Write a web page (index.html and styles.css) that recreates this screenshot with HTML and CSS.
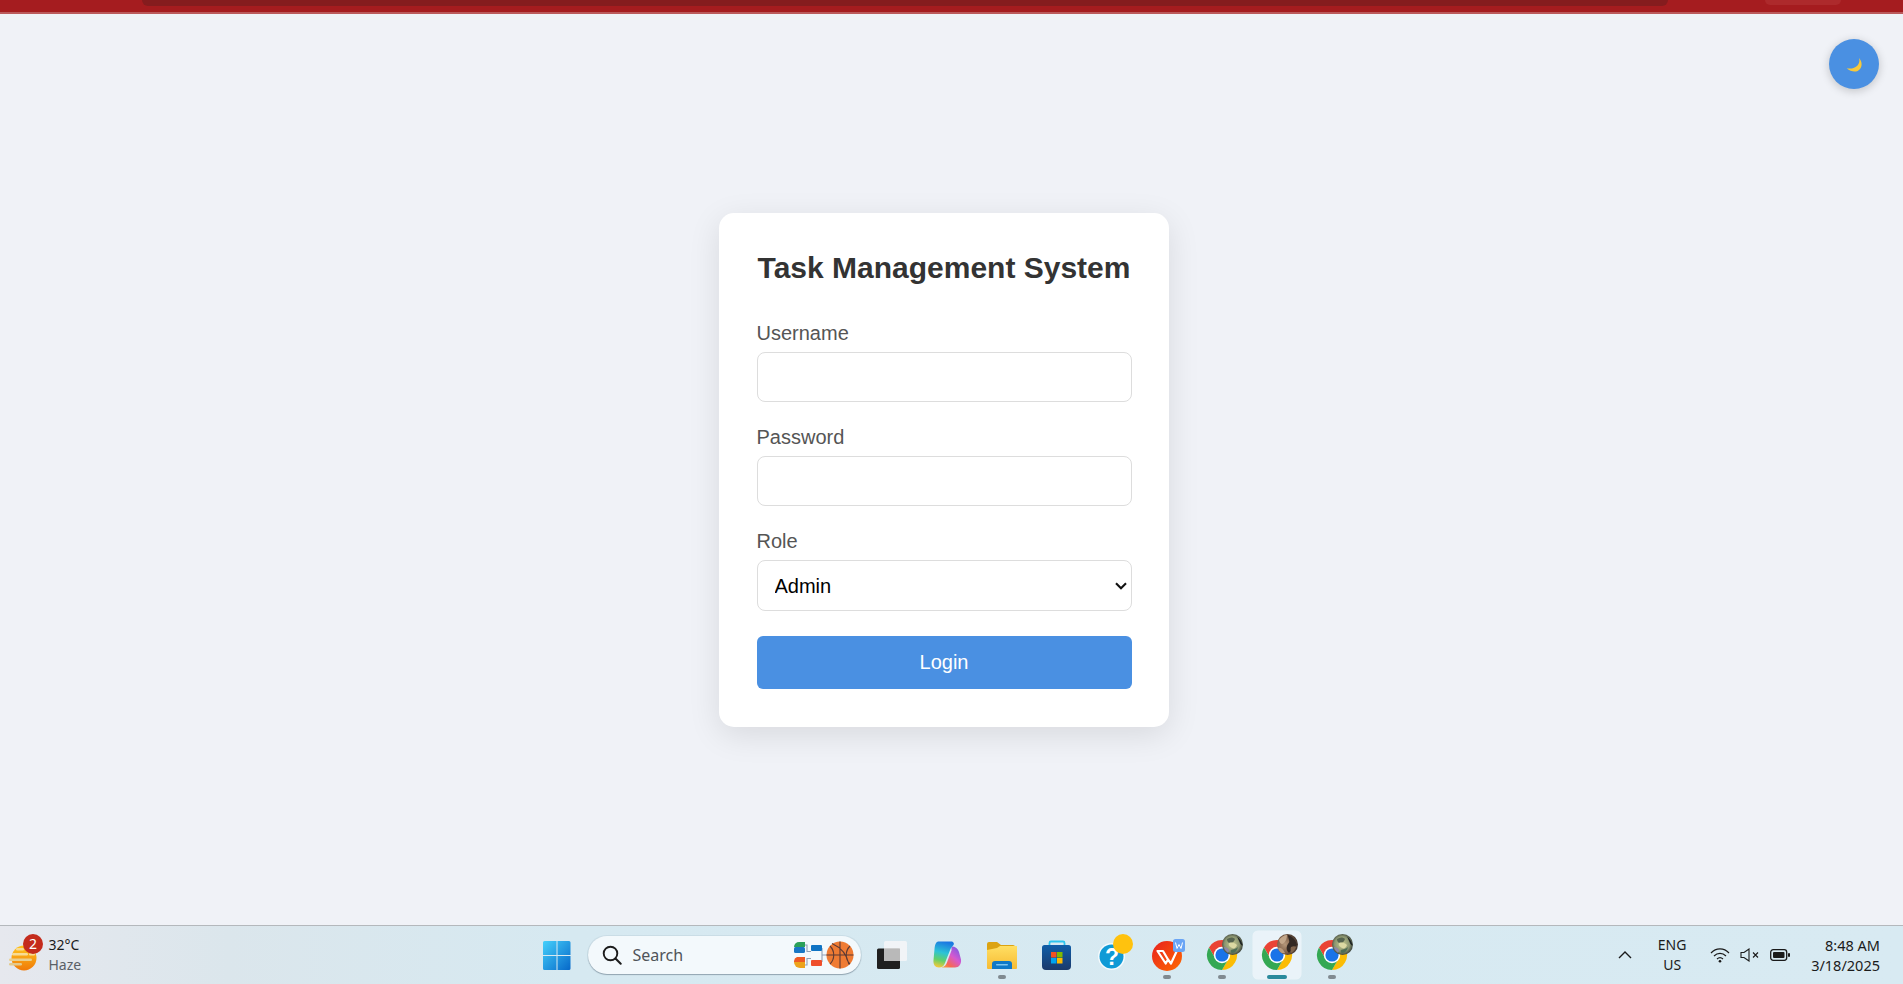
FILE: index.html
```html
<!DOCTYPE html>
<html lang="en">
<head>
<meta charset="utf-8">
<title>Task Management System</title>
<link rel="stylesheet" href="styles.css">
</head>
<body>
<svg class="defs" width="0" height="0" aria-hidden="true">
  <defs>
    <radialGradient id="avA" cx="48%" cy="48%" r="58%"><stop offset="0" stop-color="#c6c98c"/><stop offset=".62" stop-color="#8b9570"/><stop offset="1" stop-color="#23282a"/></radialGradient>
    <radialGradient id="avB" cx="38%" cy="50%" r="68%"><stop offset="0" stop-color="#b5977a"/><stop offset=".6" stop-color="#7b5b45"/><stop offset="1" stop-color="#2b2522"/></radialGradient>
    <symbol id="chrome" viewBox="0 0 48 48">
      <path fill="#ea4335" d="M11 16.500A15 15 0 0 1 37 16.500H24L17.500 27.750Z"/>
      <path fill="#fbbc04" d="M37 16.500A15 15 0 0 1 24 39L30.500 27.750 24 16.500Z"/>
      <path fill="#34a853" d="M24 39A15 15 0 0 1 11 16.500L17.500 27.750 30.500 27.750Z"/>
      <circle cx="24" cy="24" r="8.200" fill="#fff"/>
      <circle cx="24" cy="24" r="6.600" fill="#1a73e8"/>
    </symbol>
    <symbol id="avatar-green" viewBox="0 0 48 48">
      <circle cx="34.500" cy="13.500" r="10.500" fill="url(#avA)"/>
      <path d="M29 8c3-2 6-2 8 0-1 3-3 4-5 4s-3-2-3-4Z" fill="#56644f"/>
      <path d="M31 12c3-1 6 0 8 2-1 3-3 4-5 3s-4-3-3-5Z" fill="#dcd9a3"/>
      <path d="M26 16c2 0 4 1 5 3 0 2-1 3-2 2s-3-3-3-5Z" fill="#8d86a3"/>
      <path d="M33 19c2-1 5-1 7-3-1 4-3 6-6 6-1 0-2-2-1-3Z" fill="#4f6e55"/>
      <path d="M39 5.500c2 1.500 5 5 5.500 9-2 0-3-4-5.500-9Z" fill="#1e2324"/>
    </symbol>
    <symbol id="avatar-brown" viewBox="0 0 48 48">
      <circle cx="34.500" cy="13.500" r="10.500" fill="url(#avB)"/>
      <path d="M35 4c4 1 8 5 9 10-3 3-6 5-8 8-2-2-3-4-2-7s3-3 2-6-1-4-1-5Z" fill="#332823"/>
      <path d="M26 9c2-3 5-5 8-5 0 3-1 6-3 8s-4 1-5-3Z" fill="#c4a78a"/>
      <path d="M25 17c2-1 5 0 7 5-3 1-6-1-7-5Z" fill="#b99a7d"/>
      <path d="M38 16c2-1 4-1 5 0-1 3-3 5-5 6 0-2-1-4 0-6Z" fill="#82654d"/>
    </symbol>
  </defs>
</svg>

<div class="browser-strip">
  <div class="strip-tabs"></div>
  <div class="strip-tab"></div>
</div>

<main class="page">
  <button class="theme-toggle" type="button" aria-label="Toggle dark mode">
    <svg width="16" height="16" viewBox="0 0 16 16"><path fill="#f8c93a" d="M13 2C16 5 16.500 10 14 13 11.500 16.500 5.500 16.500 .7 12.300 5 13.200 9 12.200 11.500 9.500 13.500 7.500 13.800 4.500 13 2Z"/></svg>
  </button>
  <form class="card">
    <h1 class="title">Task Management System</h1>
    <div class="field">
      <label class="label" for="username">Username</label>
      <input class="control" id="username" type="text">
    </div>
    <div class="field">
      <label class="label" for="password">Password</label>
      <input class="control" id="password" type="password">
    </div>
    <div class="field field-last">
      <label class="label" for="role">Role</label>
      <div class="select-wrap">
        <select class="control control-select" id="role">
          <option>Admin</option>
          <option>User</option>
        </select>
        <svg class="select-arrow" width="12" height="8" viewBox="0 0 12 8"><path d="M1 1.200l5 5 5-5" fill="none" stroke="#111" stroke-width="2.100"/></svg>
      </div>
    </div>
    <button class="submit" type="button">Login</button>
  </form>
</main>

<footer class="taskbar">
  <div class="weather">
    <span class="weather-icon">
      <svg width="36" height="36" viewBox="0 0 36 36">
        <defs><linearGradient id="sun" x1="0" y1="0" x2="0" y2="1"><stop offset="0" stop-color="#ffc51f"/><stop offset="1" stop-color="#f07a08"/></linearGradient></defs>
        <circle cx="19" cy="21" r="12.500" fill="url(#sun)"/>
        <rect x="11" y="11" width="8" height="2.500" rx="1.200" fill="#f7dc95"/>
        <rect x="7" y="16" width="16" height="2.500" rx="1.200" fill="#f7dc95"/>
        <rect x="24" y="16" width="6" height="2.500" rx="1.200" fill="#f7dc95"/>
        <rect x="4" y="21.500" width="23" height="2.500" rx="1.200" fill="#e9cf8f"/>
        <rect x="4" y="26" width="13" height="2.500" rx="1.200" fill="#e3c98c"/>
      </svg>
      <span class="weather-badge">2</span>
    </span>
    <span class="weather-text">
      <span class="weather-temp">32°C</span>
      <span class="weather-cond">Haze</span>
    </span>
  </div>

  <div class="taskbar-center">
    <div class="slot">
      <svg width="48" height="48" viewBox="0 0 48 48">
        <defs><linearGradient id="win" x1="0" y1="0" x2="1" y2="1"><stop offset="0" stop-color="#45d0fb"/><stop offset="1" stop-color="#0668c9"/></linearGradient></defs>
        <path fill="url(#win)" d="M10 11.500a1.500 1.500 0 0 1 1.500-1.500h12v14h-13.500ZM24.500 10h11.500a1.500 1.500 0 0 1 1.500 1.500V24h-13ZM10 25h13.500v14h-12a1.500 1.500 0 0 1-1.500-1.500ZM24.500 25h13v12.500a1.500 1.500 0 0 1-1.500 1.500h-11.500Z"/>
      </svg>
    </div>

    <div class="search">
      <svg class="search-glass" width="20" height="20" viewBox="0 0 20 20"><circle cx="8.500" cy="8.500" r="6.800" fill="none" stroke="#1c1c1c" stroke-width="1.900"/><path d="M13.500 13.500l5.200 5.200" stroke="#1c1c1c" stroke-width="2" stroke-linecap="round"/></svg>
      <span class="search-label">Search</span>
      <svg class="search-bracket" width="60" height="28" viewBox="0 0 60 28">
        <path d="M10 4h3v6.500h4M10 24h3v-6.500h4M28 7v14M28 14h5" fill="none" stroke="#8fa0b5" stroke-width="1.100"/>
        <path fill="#2aa05a" d="M0 6a5 5 0 0 1 5-5h6v5Z"/>
        <rect x="0" y="6" width="11" height="6" rx="1.500" fill="#1977c4"/>
        <path fill="#ee5a24" d="M0 21a5 5 0 0 1 3-5h8v5Z"/>
        <path fill="#eda31b" d="M0 21h11v6H6a6 6 0 0 1-6-6Z"/>
        <rect x="17" y="4" width="11" height="6" rx="1" fill="#0f74c4"/>
        <rect x="17" y="19" width="11" height="6" rx="1" fill="#ef4e2b"/>
        <circle cx="46" cy="14" r="13.500" fill="#ef7b33"/>
        <path d="M46 .5v27M32.500 14h27M36 5c5 5 5 13 0 18M56 5c-5 5-5 13 0 18M38 2.500c9 4 15 11 17 21" fill="none" stroke="#5d3a34" stroke-width="1.100"/>
      </svg>
    </div>

    <div class="slot">
      <svg width="48" height="48" viewBox="0 0 48 48">
        <rect x="9" y="17.500" width="23" height="20.500" rx="1.500" fill="#1f1f1f"/>
        <rect x="16" y="10" width="23" height="20" rx="1.500" fill="#f6f7f8" fill-opacity=".82"/>
        <rect x="16" y="17.500" width="16" height="12.500" fill="#b9b9b9"/>
      </svg>
    </div>

    <div class="slot">
      <svg width="48" height="48" viewBox="0 0 48 48">
        <defs>
          <linearGradient id="cpL" x1="0.500" y1="0" x2="0.300" y2="1"><stop offset="0" stop-color="#1b78e2"/><stop offset=".42" stop-color="#2cc3d6"/><stop offset=".72" stop-color="#62d068"/><stop offset="1" stop-color="#f6c83a"/></linearGradient>
          <linearGradient id="cpR" x1="0.900" y1="0" x2="0.100" y2="1"><stop offset="0" stop-color="#6f5be6"/><stop offset=".45" stop-color="#d659cf"/><stop offset=".8" stop-color="#f7694f"/><stop offset="1" stop-color="#f9a33c"/></linearGradient>
        </defs>
        <path fill="url(#cpR)" d="M28.500 15.500C32.500 15.500 35 17.500 36 21L38 28.500C38.500 33 36 36.500 32 36.500H18.500C21.500 36 23 34 24 31.500 25.500 27 27 23 28.500 19.500Z"/>
        <path fill="url(#cpL)" d="M16 10.500H28C30.500 10.500 31.500 12.500 30.500 14 29.500 15.500 28 16.500 27.500 18 26.500 20.500 24 27 22 32 20.800 35 19 36.500 16 36.500 12 36.500 10 33.500 10.500 29L11.500 18C12 13 13 10.500 16 10.500Z"/>
      </svg>
    </div>

    <div class="slot slot-open">
      <svg width="48" height="48" viewBox="0 0 48 48">
        <defs><linearGradient id="fold" x1="0" y1="0" x2="0" y2="1"><stop offset="0" stop-color="#ffdf63"/><stop offset="1" stop-color="#f7bb33"/></linearGradient></defs>
        <path fill="#dca312" d="M9 13a2 2 0 0 1 2-2h8l4 3h12a2 2 0 0 1 2 2v8H9Z"/>
        <path fill="url(#fold)" d="M9 19l10-2 3-2h17v22a1 1 0 0 1-1 1H10a1 1 0 0 1-1-1Z"/>
        <path fill="#0f78c8" d="M14 38v-5a3 3 0 0 1 3-3h14a3 3 0 0 1 3 3v5Z"/>
        <rect x="18" y="33" width="12" height="1.500" rx=".7" fill="#7cc4ef"/>
      </svg>
    </div>

    <div class="slot">
      <svg width="48" height="48" viewBox="0 0 48 48">
        <defs><linearGradient id="bag" x1="0" y1="0" x2="0" y2="1"><stop offset="0" stop-color="#0f5da8"/><stop offset="1" stop-color="#1b3a6b"/></linearGradient></defs>
        <path d="M16.500 15v-3a1.500 1.500 0 0 1 1.500-1.500h12a1.500 1.500 0 0 1 1.500 1.500v3" fill="none" stroke="#2cc4ee" stroke-width="1.800"/>
        <path fill="url(#bag)" d="M9 16.500a2.500 2.500 0 0 1 2.500-2.500h24a2.500 2.500 0 0 1 2.500 2.500V35a4 4 0 0 1-4 4H13a4 4 0 0 1-4-4Z"/>
        <rect x="18" y="21" width="5.500" height="5.500" fill="#f25022"/>
        <rect x="24" y="21" width="5.500" height="5.500" fill="#7fba00"/>
        <rect x="18" y="27" width="5.500" height="5.500" fill="#00a4ef"/>
        <rect x="24" y="27" width="5.500" height="5.500" fill="#ffb900"/>
      </svg>
    </div>

    <div class="slot">
      <svg width="48" height="48" viewBox="0 0 48 48">
        <circle cx="23.500" cy="25.500" r="13.500" fill="#f4fafd"/>
        <circle cx="23.500" cy="25.500" r="12" fill="#0f9ad6"/>
        <text class="help-mark" x="24" y="34" text-anchor="middle">?</text>
        <circle cx="35" cy="13" r="10" fill="#ffc20e"/>
      </svg>
    </div>

    <div class="slot slot-open">
      <svg width="48" height="48" viewBox="0 0 48 48">
        <defs><linearGradient id="wps" x1="0" y1="0" x2="1" y2="1"><stop offset="0" stop-color="#e8201f"/><stop offset="1" stop-color="#ff6a00"/></linearGradient></defs>
        <circle cx="24" cy="25" r="15" fill="url(#wps)"/>
        <path d="M14.500 20h5.500l5 8.500-2.300 4ZM25 28.500l3 4 6-13" fill="none" stroke="#fff" stroke-width="2.200" stroke-linejoin="round"/>
        <rect x="30" y="8" width="12" height="13" rx="2.500" fill="#6aa5f5"/>
        <path d="M32.500 11.500l1.500 6 2-4 2 4 1.500-6" fill="none" stroke="#fff" stroke-width="1"/>
      </svg>
    </div>

    <div class="slot slot-open">
      <svg width="48" height="48" viewBox="0 0 48 48">
        <use href="#chrome" width="48" height="48"/>
        <use href="#avatar-green" width="48" height="48"/>
      </svg>
    </div>

    <div class="slot slot-active">
      <svg width="48" height="48" viewBox="0 0 48 48">
        <use href="#chrome" width="48" height="48"/>
        <use href="#avatar-brown" width="48" height="48"/>
      </svg>
    </div>

    <div class="slot slot-open">
      <svg width="48" height="48" viewBox="0 0 48 48">
        <use href="#chrome" width="48" height="48"/>
        <use href="#avatar-green" width="48" height="48"/>
      </svg>
    </div>
  </div>

  <div class="tray">
    <svg class="tray-chevron" width="14" height="8" viewBox="0 0 14 8"><path d="M1 7l6-6 6 6" fill="none" stroke="#1a1a1a" stroke-width="1.400"/></svg>
    <span class="tray-lang"><span>ENG</span><span>US</span></span>
    <span class="tray-icons">
      <svg width="20" height="16" viewBox="0 0 20 16"><path d="M1 6c5-5.500 13-5.500 18 0M4 9c3.500-3.500 8.500-3.500 12 0M7 12c1.800-1.600 4.200-1.600 6 0" fill="none" stroke="#1a1a1a" stroke-width="1.200"/><circle cx="10" cy="14.300" r="1.300" fill="#1a1a1a"/></svg>
      <svg width="20" height="14" viewBox="0 0 20 14"><path d="M1 4.500h3L9 1v12L4 9.500H1Z" fill="none" stroke="#1a1a1a" stroke-width="1.100"/><path d="M13 4.500l5 5M18 4.500l-5 5" stroke="#1a1a1a" stroke-width="1.100"/></svg>
      <svg width="20" height="12" viewBox="0 0 20 12"><rect x=".7" y=".7" width="16" height="10.600" rx="2.500" fill="none" stroke="#1a1a1a" stroke-width="1.300"/><rect x="3" y="3" width="11.500" height="6" rx="1" fill="#1a1a1a"/><rect x="18" y="4" width="2" height="4" rx="1" fill="#1a1a1a"/></svg>
    </span>
    <span class="tray-clock"><span>8:48 AM</span><span>3/18/2025</span></span>
  </div>
</footer>
</body>
</html>
```
FILE: styles.css
```css
* { box-sizing: border-box; }

html, body { height: 100%; }

body {
  margin: 0;
  height: 100vh;
  display: flex;
  flex-direction: column;
  overflow: hidden;
  background: #f0f2f7;
  font-family: "Liberation Sans", Arial, sans-serif;
}

.defs { position: absolute; }

/* clipped browser chrome at the top */
.browser-strip {
  flex: 0 0 14px;
  display: flex;
  align-items: flex-start;
  padding-left: 142px;
  background: #a51c1f;
  border-bottom: 2px solid #bb5a5c;
}

.strip-tabs {
  width: 1526px;
  height: 6px;
  background: #851c1e;
  border-radius: 0 0 8px 8px;
}

.strip-tab {
  width: 76px;
  height: 5px;
  margin-left: 97px;
  background: #ad2a2c;
  border-radius: 0 0 8px 8px;
}

/* page body */
.page {
  position: relative;
  flex: 1;
  min-height: 0;
  display: flex;
  align-items: center;
  justify-content: center;
  padding: 1px 15px 0 0;
}

.theme-toggle {
  position: absolute;
  top: 25px;
  right: 24px;
  width: 50px;
  height: 50px;
  padding: 0;
  border: 0;
  border-radius: 50%;
  display: flex;
  align-items: center;
  justify-content: center;
  background: #4a90e2;
  box-shadow: 0 2px 10px rgba(0, 0, 0, .2);
}

.card {
  width: 450px;
  padding: 38px 37.500px;
  background: #fff;
  border-radius: 15px;
  box-shadow: 0 8px 32px rgba(0, 0, 0, .1);
}

.title {
  margin: 0 0 37px;
  font-size: 30px;
  font-weight: 700;
  text-align: center;
  color: #333;
}

.field { margin-bottom: 24px; }
.field-last { margin-bottom: 25px; }

.label {
  display: block;
  margin-bottom: 7px;
  font-size: 20px;
  color: #555;
}

.control {
  display: block;
  width: 100%;
  height: 50px;
  padding: 0 16px;
  border: 1.500px solid #ddd;
  border-radius: 8px;
  background: #fff;
  font-family: inherit;
  font-size: 20px;
  color: #000;
}

.select-wrap { position: relative; }

.control-select {
  height: 51px;
  padding: 0 24px 0 17px;
  appearance: none;
}

.select-arrow {
  position: absolute;
  top: 21.500px;
  right: 5px;
  pointer-events: none;
}

.submit {
  display: block;
  width: 100%;
  height: 53px;
  border: 0;
  border-radius: 6px;
  background: #4a90e2;
  color: #fff;
  font-family: inherit;
  font-size: 20px;
}

/* Windows taskbar */
.taskbar {
  flex: 0 0 59px;
  display: grid;
  grid-template-columns: 532.500px auto 1fr;
  align-items: center;
  border-top: 1px solid #b4b8bc;
  background: linear-gradient(90deg, #e6e8ee 0, #dbe6ec 12%, #d6e9f1 30%, #d8eaf2 100%);
  font-family: "Noto Sans", "Open Sans", sans-serif;
  color: #1b1b1b;
}

.weather {
  display: flex;
  align-items: center;
  padding-left: 5px;
}

.weather-icon {
  position: relative;
  width: 36px;
  height: 36px;
  margin-right: 7.500px;
  display: block;
}

.weather-icon svg { display: block; }

.weather-badge {
  position: absolute;
  top: -3px;
  left: 18px;
  width: 20px;
  height: 20px;
  border-radius: 50%;
  display: flex;
  align-items: center;
  justify-content: center;
  background: #c42b1c;
  color: #fff;
  font-size: 14px;
  line-height: 1;
}

.weather-text {
  display: flex;
  flex-direction: column;
  font-size: 14px;
  line-height: 20px;
}

.weather-cond { color: #5a5f66; }

.taskbar-center {
  display: flex;
  align-items: center;
  gap: 7px;
}

.slot {
  position: relative;
  flex: none;
  width: 48px;
  height: 48px;
  border-radius: 5px;
}

.slot svg { display: block; }

.slot-open::after,
.slot-active::after {
  content: "";
  position: absolute;
  left: 20px;
  bottom: 0;
  width: 8px;
  height: 4px;
  border-radius: 2px;
  background: #808a90;
}

.slot-active {
  background: #eaf3f9;
  box-shadow: 0 0 0 .5px rgba(255, 255, 255, .5);
}

.slot-active::after {
  left: 14px;
  width: 20px;
  background: #2a8a9c;
}

.search {
  flex: none;
  width: 273.500px;
  height: 38px;
  padding: 0 7px 0 14px;
  display: flex;
  align-items: center;
  background: #f3f9fc;
  border-radius: 19px;
  box-shadow: 0 1px 1px rgba(90, 110, 125, .5), 0 0 0 1px rgba(190, 210, 220, .5);
}

.search-glass { flex: none; }

.search-label {
  flex: 1;
  margin-left: 11px;
  font-size: 16px;
  color: #4f5459;
}

.search-bracket { flex: none; }

.help-mark {
  font-family: "Liberation Sans", sans-serif;
  font-size: 23px;
  font-weight: 700;
  fill: #fff;
}

.tray {
  display: flex;
  align-items: center;
  justify-content: flex-end;
  padding-right: 23px;
  font-size: 14px;
  line-height: 20px;
}

.tray-chevron { flex: none; margin-right: 25.500px; }

.tray-lang {
  width: 29px;
  margin-right: 23px;
  display: flex;
  flex-direction: column;
  align-items: center;
}

.tray-icons {
  display: flex;
  align-items: center;
  gap: 10px;
  margin-right: 21.500px;
}

.tray-icons svg { display: block; flex: none; }

.tray-clock {
  display: flex;
  flex-direction: column;
  align-items: flex-end;
  font-size: 14.500px;
}
```
